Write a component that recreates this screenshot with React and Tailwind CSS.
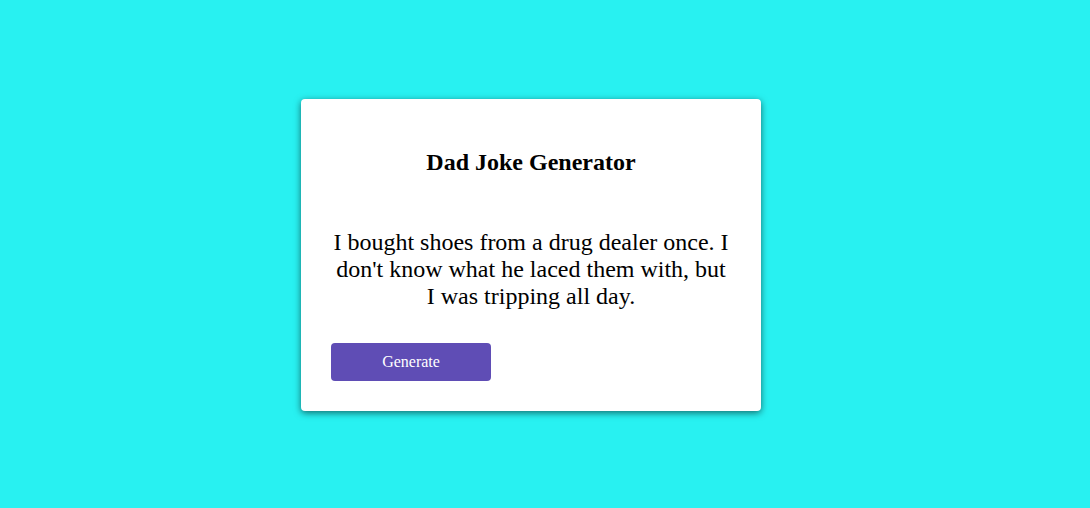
export default function App() {
  return (
    <div className="min-h-screen w-full bg-[#28f1f1] flex items-center justify-center pr-[28px] pt-[2px]" style={{ fontFamily: '"Liberation Serif", "Times New Roman", serif' }}>
      <div className="w-[460px] bg-white rounded-[4px] p-[30px] shadow-[0_2px_7px_rgba(0,0,0,0.55)] text-black">
        <h2 className="mt-[20px] text-[24px] leading-[27px] font-bold text-center">Dad Joke Generator</h2>
        <p className="mt-[53px] text-[24px] leading-[27px] text-center">
          I bought shoes from a drug dealer once. I don't know what he laced them with, but I was tripping all day.
        </p>
        <button className="mt-[33px] w-[160px] h-[38px] rounded-[4px] bg-[#5f4db5] text-white text-[16px]">
          Generate
        </button>
      </div>
    </div>
  );
}
